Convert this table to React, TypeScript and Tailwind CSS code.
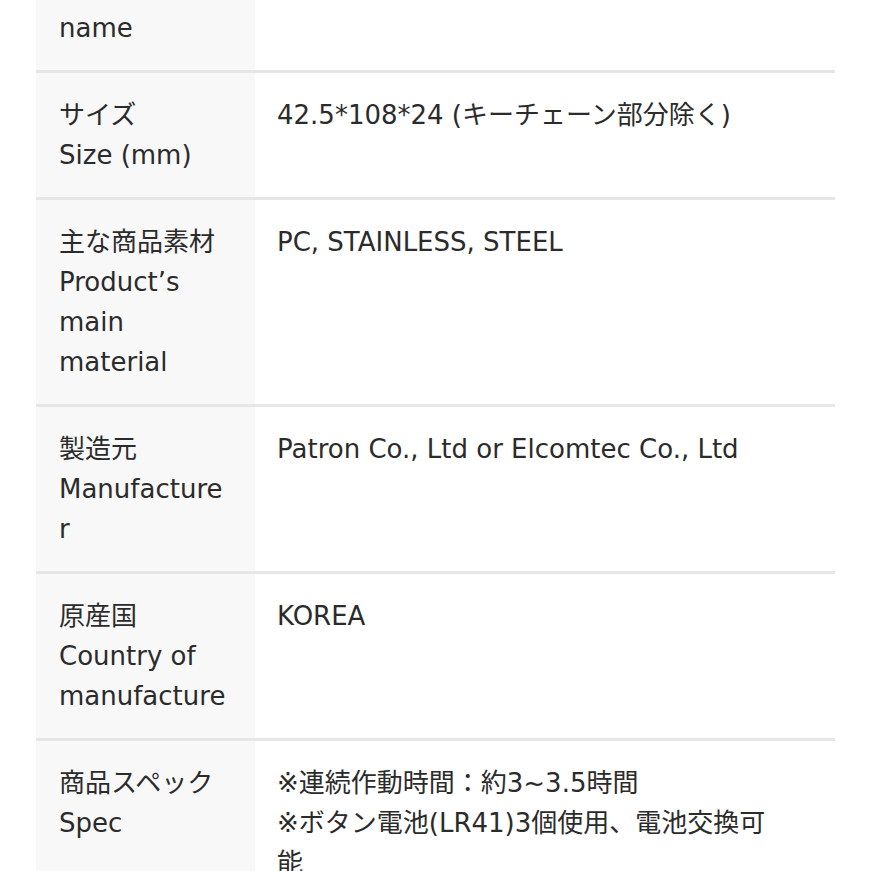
const rows: { label: string[]; value: string[] }[] = [
  { label: ["商品名", "Product", "name"], value: [] },
  { label: ["サイズ", "Size (mm)"], value: ["42.5*108*24 (キーチェーン部分除く)"] },
  { label: ["主な商品素材", "Product’s main material"], value: ["PC, STAINLESS, STEEL"] },
  { label: ["製造元", "Manufacturer"], value: ["Patron Co., Ltd or Elcomtec Co., Ltd"] },
  { label: ["原産国", "Country of manufacture"], value: ["KOREA"] },
  { label: ["商品スペック", "Spec"], value: ["※連続作動時間：約3~3.5時間", "※ボタン電池(LR41)3個使用、電池交換可能"] },
];

export default function App() {
  return (
    <div
      className="w-[871px] h-[871px] overflow-hidden bg-white text-[#2b2b2b]"
      style={{ fontFamily: '"DejaVu Sans", "Noto Sans CJK JP", sans-serif' }}
    >
      <div className="ml-[36px] mt-[-94px] w-[799px] text-[26px] leading-[40px]">
        {rows.map((row, i) => (
          <div key={i} className="flex border-b-[3px] border-[#e6e6e6]">
            <div className="w-[219px] shrink-0 bg-[#f8f8f8] px-[23px] py-[22px] break-words">
              {row.label.map((l, j) => (
                <div key={j}>{l}</div>
              ))}
            </div>
            <div className="flex-1 pl-[22px] pr-[58px] py-[22px]">
              {row.value.map((v, j) => (
                <div key={j}>{v}</div>
              ))}
            </div>
          </div>
        ))}
      </div>
    </div>
  );
}
